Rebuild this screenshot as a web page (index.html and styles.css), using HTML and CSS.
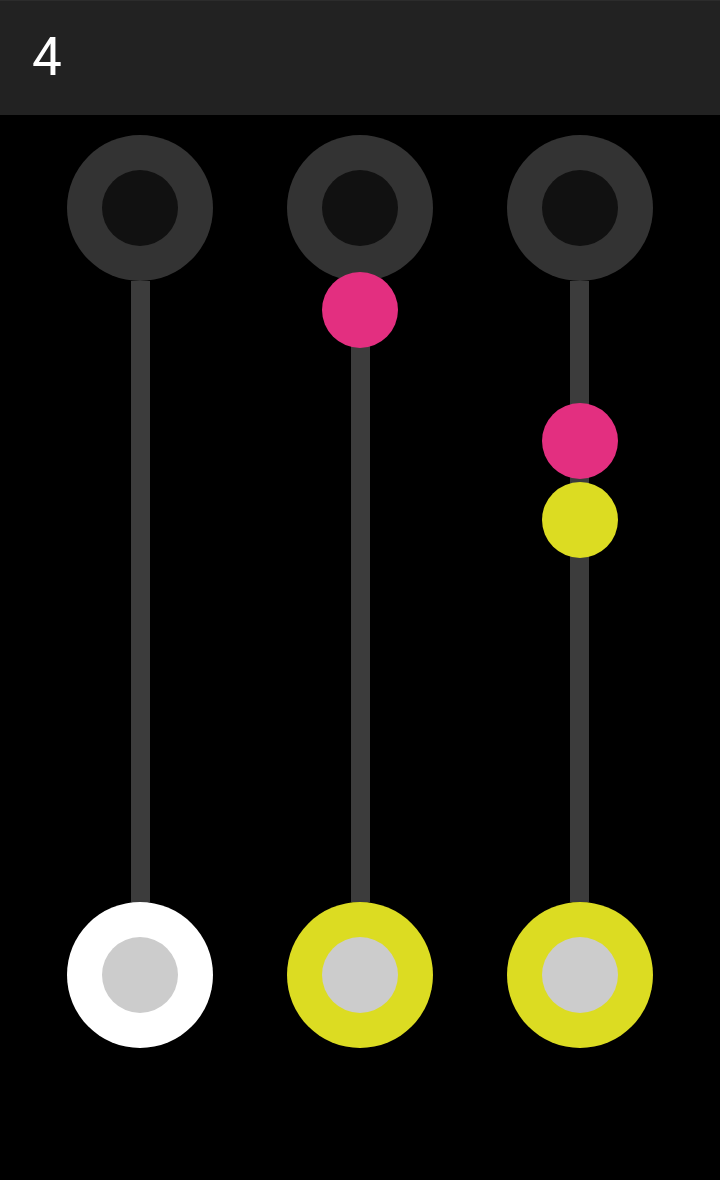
FILE: index.html
```html
<!DOCTYPE html>
<html>
<head>
<meta charset="utf-8">
<link rel="stylesheet" href="styles.css">
</head>
<body>
<header class="bar"><span class="level">4</span></header>
<main class="board">
  <div class="tube">
    <div class="socket socket-top"><div class="hole"></div></div>
    <div class="track">
      <div class="rail"></div>
    </div>
    <div class="socket socket-white"><div class="hole"></div></div>
  </div>
  <div class="tube">
    <div class="socket socket-top"><div class="hole"></div></div>
    <div class="track">
      <div class="rail"></div>
      <div class="ball ball-pink" style="top:-9px"></div>
    </div>
    <div class="socket socket-yellow"><div class="hole"></div></div>
  </div>
  <div class="tube">
    <div class="socket socket-top"><div class="hole"></div></div>
    <div class="track">
      <div class="rail"></div>
      <div class="ball ball-pink" style="top:122px"></div>
      <div class="ball ball-yellow" style="top:201px"></div>
    </div>
    <div class="socket socket-yellow"><div class="hole"></div></div>
  </div>
</main>
</body>
</html>
```
FILE: styles.css
```css
html, body {
  margin: 0;
  padding: 0;
  background: #000;
  width: 720px;
  height: 1180px;
  overflow: hidden;
  font-family: Roboto, "Noto Sans", sans-serif;
}

.bar {
  height: 115px;
  background: #222222;
  border-top: 1px solid #2c2c2c;
  box-sizing: border-box;
  display: flex;
  align-items: center;
  padding-left: 32px;
}

.level {
  color: #fff;
  font-size: 53px;
  font-weight: 400;
  line-height: 1;
  margin-top: -2px;
}

.board {
  display: grid;
  grid-template-columns: 220px 220px 219px;
  padding: 20px 30px 0;
}

.tube {
  display: flex;
  flex-direction: column;
  align-items: center;
  height: 913px;
}

.socket {
  width: 146px;
  height: 146px;
  border-radius: 50%;
  display: flex;
  align-items: center;
  justify-content: center;
  flex: none;
}

.socket .hole {
  width: 76px;
  height: 76px;
  border-radius: 50%;
}

.socket-top { background: #333333; }
.socket-top .hole { background: #111111; }

.socket-white { background: #ffffff; }
.socket-yellow { background: #dcdc22; }
.socket-white .hole,
.socket-yellow .hole { background: #cccccc; }

.track {
  flex: 1;
  width: 76px;
  position: relative;
  display: flex;
  justify-content: center;
}

.rail {
  width: 19px;
  background: #3c3c3c;
}

.ball {
  position: absolute;
  left: 0;
  width: 76px;
  height: 76px;
  border-radius: 50%;
}

.ball-pink { background: #e32f80; }
.ball-yellow { background: #dcdc22; }
```
